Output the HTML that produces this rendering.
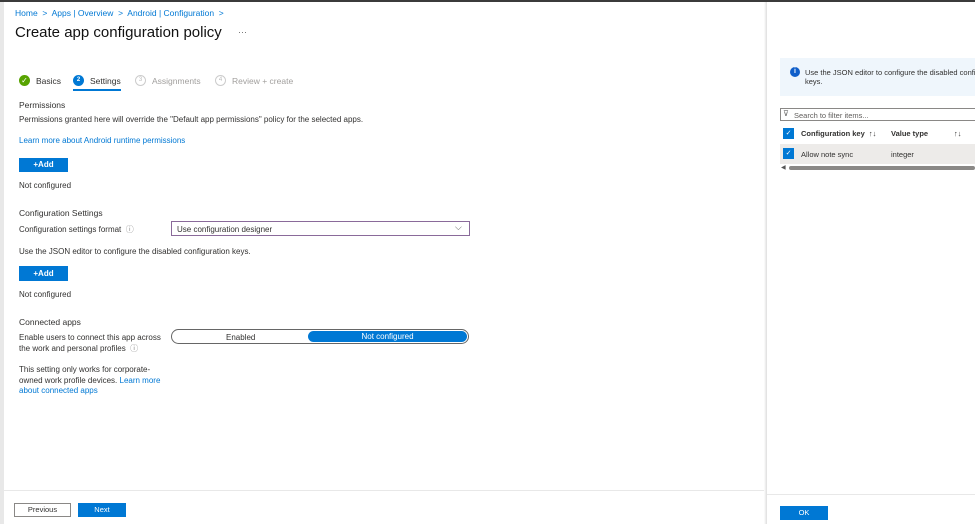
<!DOCTYPE html>
<html><head><style>
*{margin:0;padding:0;box-sizing:border-box}
body{width:975px;height:524px;overflow:hidden;background:#fff;font-family:"Liberation Sans",sans-serif;font-size:8px;color:#323130;position:relative}
.a{position:absolute;white-space:nowrap}
.l{color:#0078d4}
.btn{position:absolute;background:#0078d4;color:#fff;font-weight:bold;font-size:8px;text-align:center}
</style></head><body>
<div class="a" style="left:0;top:0;width:975px;height:2px;background:#3b3b3b"></div>
<div class="a" style="left:0;top:2px;width:4px;height:522px;background:#e8e8e8"></div>
<div class="a l" style="left:15px;top:8px;font-size:8.5px">Home &nbsp;&gt;&nbsp; Apps | Overview &nbsp;&gt;&nbsp; Android | Configuration &nbsp;&gt;</div>
<div class="a" style="left:15px;top:24px;font-size:15px;color:#111">Create app configuration policy</div>
<div class="a" style="left:238px;top:27px;font-size:9px;color:#666">···</div>
<!-- steps -->
<div class="a" style="left:19px;top:75px;width:11px;height:11px;border-radius:50%;background:#57a300;color:#fff;font-size:8px;text-align:center;line-height:11px">✓</div>
<div class="a" style="left:36px;top:76px;font-size:8.5px">Basics</div>
<div class="a" style="left:73px;top:75px;width:11px;height:11px;border-radius:50%;background:#0078d4;color:#fff;font-size:6px;text-align:center;line-height:11px;font-weight:bold">2</div>
<div class="a" style="left:90px;top:76px;font-size:8.5px">Settings</div>
<div class="a" style="left:73px;top:89px;width:48px;height:2px;background:#0078d4"></div>
<div class="a" style="left:135px;top:75px;width:11px;height:11px;border-radius:50%;border:1px solid #ccc;color:#bbb;font-size:6px;text-align:center;line-height:9px">3</div>
<div class="a" style="left:152px;top:76px;font-size:8.5px;color:#a19f9d">Assignments</div>
<div class="a" style="left:215px;top:75px;width:11px;height:11px;border-radius:50%;border:1px solid #ccc;color:#bbb;font-size:6px;text-align:center;line-height:9px">4</div>
<div class="a" style="left:232px;top:76px;font-size:8.5px;color:#a19f9d">Review + create</div>
<div class="a" style="left:19px;top:100px;font-size:8.5px">Permissions</div>
<div class="a" style="left:19px;top:115px">Permissions granted here will override the "Default app permissions" policy for the selected apps.</div>
<div class="a l" style="left:19px;top:136px">Learn more about Android runtime permissions</div>
<div class="btn" style="left:19px;top:158px;width:49px;height:14px;line-height:14px">+Add</div>
<div class="a" style="left:19px;top:181px">Not configured</div>
<div class="a" style="left:19px;top:208px;font-size:8.5px">Configuration Settings</div>
<div class="a" style="left:19px;top:224px">Configuration settings format &nbsp;<span style="color:#888">ⓘ</span></div>
<div class="a" style="left:171px;top:221px;width:299px;height:15px;border:1px solid #8a6a9a;padding:3px 5px">Use configuration designer</div>
<div class="a" style="left:455px;top:222px;font-size:9px;color:#555">⌵</div>
<div class="a" style="left:19px;top:247px">Use the JSON editor to configure the disabled configuration keys.</div>
<div class="btn" style="left:19px;top:266px;width:49px;height:15px;line-height:15px">+Add</div>
<div class="a" style="left:19px;top:290px">Not configured</div>
<div class="a" style="left:19px;top:317px;font-size:8.5px">Connected apps</div>
<div class="a" style="left:19px;top:333px;line-height:10.5px">Enable users to connect this app across<br>the work and personal profiles &nbsp;<span style="color:#888">ⓘ</span></div>
<div class="a" style="left:171px;top:329px;width:298px;height:15px;border:1px solid #666;border-radius:8px"></div>
<div class="a" style="left:226px;top:333px">Enabled</div>
<div class="a" style="left:308px;top:331px;width:159px;height:11px;border-radius:6px;background:#0078d4;color:#fff;text-align:center;line-height:11px">Not configured</div>
<div class="a" style="left:19px;top:365px;line-height:10.5px">This setting only works for corporate-<br>owned work profile devices. <span class="l">Learn more</span><br><span class="l">about connected apps</span></div>
<!-- footer -->
<div class="a" style="left:4px;top:490px;width:762px;height:1px;background:#e8e8e8"></div>
<div class="a" style="left:14px;top:503px;width:57px;height:14px;border:1px solid #8a8886;font-size:7.5px;text-align:center;line-height:12px">Previous</div>
<div class="btn" style="left:78px;top:503px;width:48px;height:14px;line-height:14px;font-weight:normal;font-size:7.5px">Next</div>
<!-- right panel -->
<div class="a" style="left:764px;top:2px;width:3px;height:522px;background:linear-gradient(90deg,#fff,#ddd)"></div>
<div class="a" style="left:780px;top:58px;width:195px;height:38px;background:#eff6fc"></div>
<div class="a" style="left:790px;top:67px;width:10px;height:10px;border-radius:50%;background:#0f5ec9;color:#fff;font-size:7px;text-align:center;line-height:10px;font-weight:bold">i</div>
<div class="a" style="left:805px;top:68px;font-size:7.5px;line-height:9px">Use the JSON editor to configure the disabled configu<br>keys.</div>
<div class="a" style="left:780px;top:108px;width:200px;height:13px;border:1px solid #8a8886;padding:2px 13px;font-size:7.5px;color:#605e5c">Search to filter items...</div>
<div class="a" style="left:783px;top:109px;font-size:8px;color:#666">⊽</div>
<div class="a" style="left:783px;top:128px;width:11px;height:11px;background:#0078d4;color:#fff;font-size:7px;text-align:center;line-height:11px">✓</div>
<div class="a" style="left:801px;top:129px;font-weight:bold;font-size:7.5px">Configuration key &nbsp;↑↓</div>
<div class="a" style="left:891px;top:129px;font-weight:bold;font-size:7.5px">Value type</div>
<div class="a" style="left:954px;top:129px;font-size:7.5px">↑↓</div>
<div class="a" style="left:780px;top:144px;width:195px;height:20px;background:#edebe9"></div>
<div class="a" style="left:783px;top:148px;width:11px;height:11px;background:#0078d4;color:#fff;font-size:7px;text-align:center;line-height:11px">✓</div>
<div class="a" style="left:801px;top:150px;font-size:7.5px">Allow note sync</div>
<div class="a" style="left:891px;top:150px;font-size:7.5px">integer</div>
<div class="a" style="left:781px;top:164px;font-size:6px;color:#555">◀</div>
<div class="a" style="left:789px;top:166px;width:186px;height:4px;border-radius:2px;background:#8a8886"></div>
<div class="a" style="left:767px;top:494px;width:208px;height:1px;background:#e8e8e8"></div>
<div class="btn" style="left:780px;top:506px;width:48px;height:14px;line-height:14px;font-weight:normal;font-size:7.5px">OK</div>
</body></html>
